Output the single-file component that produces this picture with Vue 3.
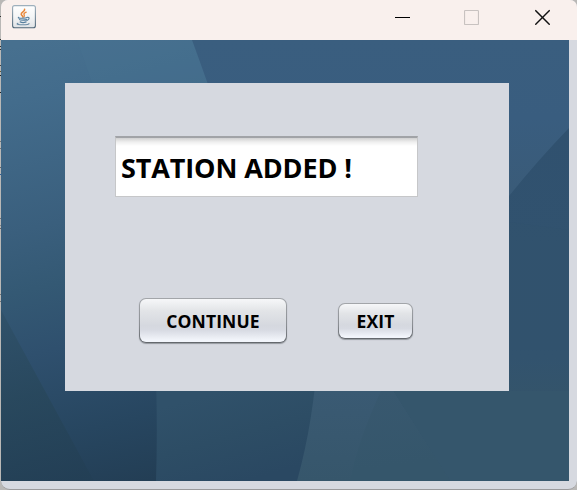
<script setup>
import { ref } from 'vue'

const message = ref('STATION ADDED !')
const edgeMarks = [
  { y: 16, c: '#333' }, { y: 39, c: '#333' }, { y: 46, c: '#333' }, { y: 49, c: '#333' },
  { y: 65, c: '#444' }, { y: 71, c: '#6b5a30' }, { y: 75, c: '#222' }, { y: 92, c: '#222' },
  { y: 141, c: '#777' }, { y: 148, c: '#777' }, { y: 167, c: '#666' }, { y: 174, c: '#2f5f9c' },
  { y: 218, c: '#777' }, { y: 225, c: '#888' }, { y: 228, c: '#666' }, { y: 294, c: '#777' }, { y: 301, c: '#777' }
]
</script>

<template>
  <div class="screen">
    <svg class="edge" width="1" height="490">
      <rect v-for="m in edgeMarks" :key="m.y" x="0" :y="m.y" width="1" height="1" :fill="m.c" />
    </svg>
    <div class="window">
      <header class="titlebar">
        <svg class="java" width="24" height="24" viewBox="0 0 24 24">
          <defs>
            <linearGradient id="tile" x1="0" y1="0" x2="0" y2="1">
              <stop offset="0" stop-color="#fff" />
              <stop offset="0.5" stop-color="#f4f5f6" />
              <stop offset="1" stop-color="#dfe2e5" />
            </linearGradient>
            <linearGradient id="tileEdge" x1="0" y1="0" x2="0" y2="1">
              <stop offset="0" stop-color="#9eb0bd" />
              <stop offset="1" stop-color="#4f6678" />
            </linearGradient>
          </defs>
          <rect x="0.6" y="0.6" width="22.8" height="22.2" rx="2" fill="url(#tile)" stroke="url(#tileEdge)" stroke-width="1.1" />
          <g fill="none" stroke-linecap="round">
            <path d="M12.6 4.2c.5 2.2-3.5 2.8-3.4 4.9 0 1.1 1.3 1.6 1.7 2.8" stroke="#e8873a" stroke-width="1.6" />
            <path d="M14.2 7.2c-1.4.6-2.6 1.3-2.2 2.4.3.7.8 1.1 0 2.1" stroke="#e8873a" stroke-width="1.3" />
            <path d="M6.8 12.3c-1.7.8 1.6 1 4.3.9 1.7 0 3.4-.2 4-.6" stroke="#58809f" stroke-width="1.2" />
            <path d="M7.5 14.6c.8.8 5.8.7 7.1.1M8.2 16.9c1.5.7 4.5.6 5.9 0" stroke="#58809f" stroke-width="1.3" />
            <path d="M15.4 12.3c2-.5 2.7 1.9-.5 3.2" stroke="#58809f" stroke-width="1.1" />
            <path d="M6 18.3c-3 1 2.1 1.6 5.3 1.5 3.3 0 6-.5 5.7-1.3" stroke="#6c8ca5" stroke-width="1.1" />
          </g>
        </svg>
        <div class="controls">
          <svg width="15" height="16" viewBox="0 0 15 16"><path d="M0 8.5h15" stroke="#000" /></svg>
          <svg class="maximize" width="15" height="16" viewBox="0 0 15 16"><rect x="0.5" y="1.5" width="14" height="14" rx="0.8" fill="none" stroke="#c8c2c0" stroke-width="1.2" /></svg>
          <svg width="15" height="16" viewBox="0 0 15 16"><path d="M.3 1.3l14.4 14.4M14.7 1.3L.3 15.7" fill="none" stroke="#111" stroke-width="1.4" /></svg>
        </div>
      </header>

      <main class="desktop">
        <svg class="wallpaper" width="568" height="441" viewBox="1 40 568 441">
          <defs>
            <linearGradient id="left" gradientUnits="userSpaceOnUse" x1="40" y1="40" x2="145" y2="481">
              <stop offset="0" stop-color="#47708f" />
              <stop offset="0.12" stop-color="#436c8c" />
              <stop offset="0.4" stop-color="#3a5f7d" />
              <stop offset="0.53" stop-color="#345974" />
              <stop offset="0.67" stop-color="#2f506e" />
              <stop offset="0.86" stop-color="#274660" />
              <stop offset="1" stop-color="#233e55" />
            </linearGradient>
            <linearGradient id="corner" gradientUnits="userSpaceOnUse" x1="10" y1="310" x2="60" y2="481">
              <stop offset="0" stop-color="#2f5068" />
              <stop offset="0.5" stop-color="#28475b" />
              <stop offset="1" stop-color="#233f55" />
            </linearGradient>
            <linearGradient id="mid" gradientUnits="userSpaceOnUse" x1="220" y1="391" x2="245" y2="481">
              <stop offset="0" stop-color="#30516a" />
              <stop offset="0.5" stop-color="#2d4d65" />
              <stop offset="1" stop-color="#2a4862" />
            </linearGradient>
            <linearGradient id="right" gradientUnits="userSpaceOnUse" x1="0" y1="130" x2="0" y2="481">
              <stop offset="0" stop-color="#30516f" />
              <stop offset="0.65" stop-color="#32536e" />
              <stop offset="0.75" stop-color="#34546b" />
              <stop offset="1" stop-color="#35566b" />
            </linearGradient>
            <linearGradient id="low" gradientUnits="userSpaceOnUse" x1="0" y1="391" x2="0" y2="481">
              <stop offset="0" stop-color="#3a5a73" />
              <stop offset="1" stop-color="#36566b" />
            </linearGradient>
            <linearGradient id="wedge" gradientUnits="userSpaceOnUse" x1="390" y1="391" x2="400" y2="465">
              <stop offset="0" stop-color="#38586f" />
              <stop offset="1" stop-color="#35566b" />
            </linearGradient>
            <linearGradient id="top" gradientUnits="userSpaceOnUse" x1="400" y1="40" x2="400" y2="196">
              <stop offset="0" stop-color="#3a5e7f" />
              <stop offset="0.5" stop-color="#395d7f" />
              <stop offset="1" stop-color="#3a5b78" />
            </linearGradient>
          </defs>
          <path d="M1 40H569V481H1z" fill="url(#left)" />
          <path d="M77 40H200L220 100H98z" fill="#4a7492" opacity="0.3" />
          <path d="M1 310L94 481H1z" fill="url(#corner)" opacity="0.8" />
          <path d="M192 40H569V240H260Q225 130 192 40z" fill="url(#top)" />
          <path d="M569 128Q538 160 509 196L400 330V481H569z" fill="url(#right)" />
          <path d="M509 222L569 230V350H509z" fill="#35566b" opacity="0.12" />
          <path d="M155 350Q158 420 156 481H320V350z" fill="url(#mid)" />
          <path d="M318 350Q314 420 297 481H460V350z" fill="url(#low)" />
          <path d="M393 391L450 481H569V391z" fill="#35566c" />
          <path d="M381 391Q358 440 350 481H450L393 391z" fill="url(#wedge)" />
        </svg>

        <section class="panel">
          <input v-model="message" class="field" type="text" spellcheck="false" />
          <div class="actions">
            <button class="btn continue" type="button">CONTINUE</button>
            <button class="btn exit" type="button">EXIT</button>
          </div>
        </section>
      </main>
    </div>
  </div>
</template>

<style>
body {
  margin: 0;
  overflow: hidden;
}
</style>

<style scoped>
.screen {
  display: flex;
  width: 577px;
  height: 490px;
  background: #b9b8b6;
  overflow: hidden;
}
.edge {
  flex: none;
}
.window {
  box-sizing: border-box;
  width: 576px;
  height: 490px;
  background: #d6d9e0;
  border-bottom: 1px solid #9a9a9c;
  border-radius: 7px 7px 9px 9px;
  overflow: hidden;
}
.titlebar {
  display: flex;
  justify-content: space-between;
  align-items: flex-start;
  box-sizing: border-box;
  height: 40px;
  padding: 5px 27px 0 11px;
  background: #f9f0ed;
}
.controls {
  display: flex;
  gap: 55px;
  padding-top: 4px;
}
.maximize {
  margin: 0 1px 0 -1px;
}
.desktop {
  display: grid;
  width: 568px;
  height: 441px;
}
.wallpaper,
.panel {
  grid-area: 1 / 1;
}
.panel {
  box-sizing: border-box;
  width: 444px;
  height: 308px;
  margin: 43px 0 0 64px;
  padding: 53px 0 0 50px;
  background: #d6d9e0;
  z-index: 1;
}
.field {
  display: block;
  box-sizing: border-box;
  width: 303px;
  height: 61px;
  margin: 0;
  padding: 1px 5px 0;
  border: 1px solid #c6c7c9;
  border-top: 2px solid #a1a3a7;
  border-radius: 0;
  outline: none;
  background: linear-gradient(#d0d0d1, #efefef 4px, #fff 8px);
  color: #000;
  font: 700 27px "Open Sans", "Noto Sans", sans-serif;
  letter-spacing: -0.12px;
}
.actions {
  display: flex;
  align-items: center;
  gap: 51px;
  margin: 101px 0 0 24px;
}
.btn {
  box-sizing: border-box;
  padding: 1px 0 0;
  border: 1.5px solid transparent;
  border-radius: 7px;
  background:
    linear-gradient(#f6f7f9, #e2e4e7 28%, #d5d8df 62%, #d7dae2 72%, #f2f5fb 96%) padding-box,
    linear-gradient(#a3a6aa, #8b8f94 60%, #63676c) border-box;
  box-shadow: 0 1px 1px #94989e;
  color: #000;
  font: 700 17.5px "Open Sans", "Noto Sans", sans-serif;
  letter-spacing: 0.1px;
}
.continue {
  width: 148px;
  height: 45px;
}
.exit {
  width: 75px;
  height: 36px;
}
</style>
